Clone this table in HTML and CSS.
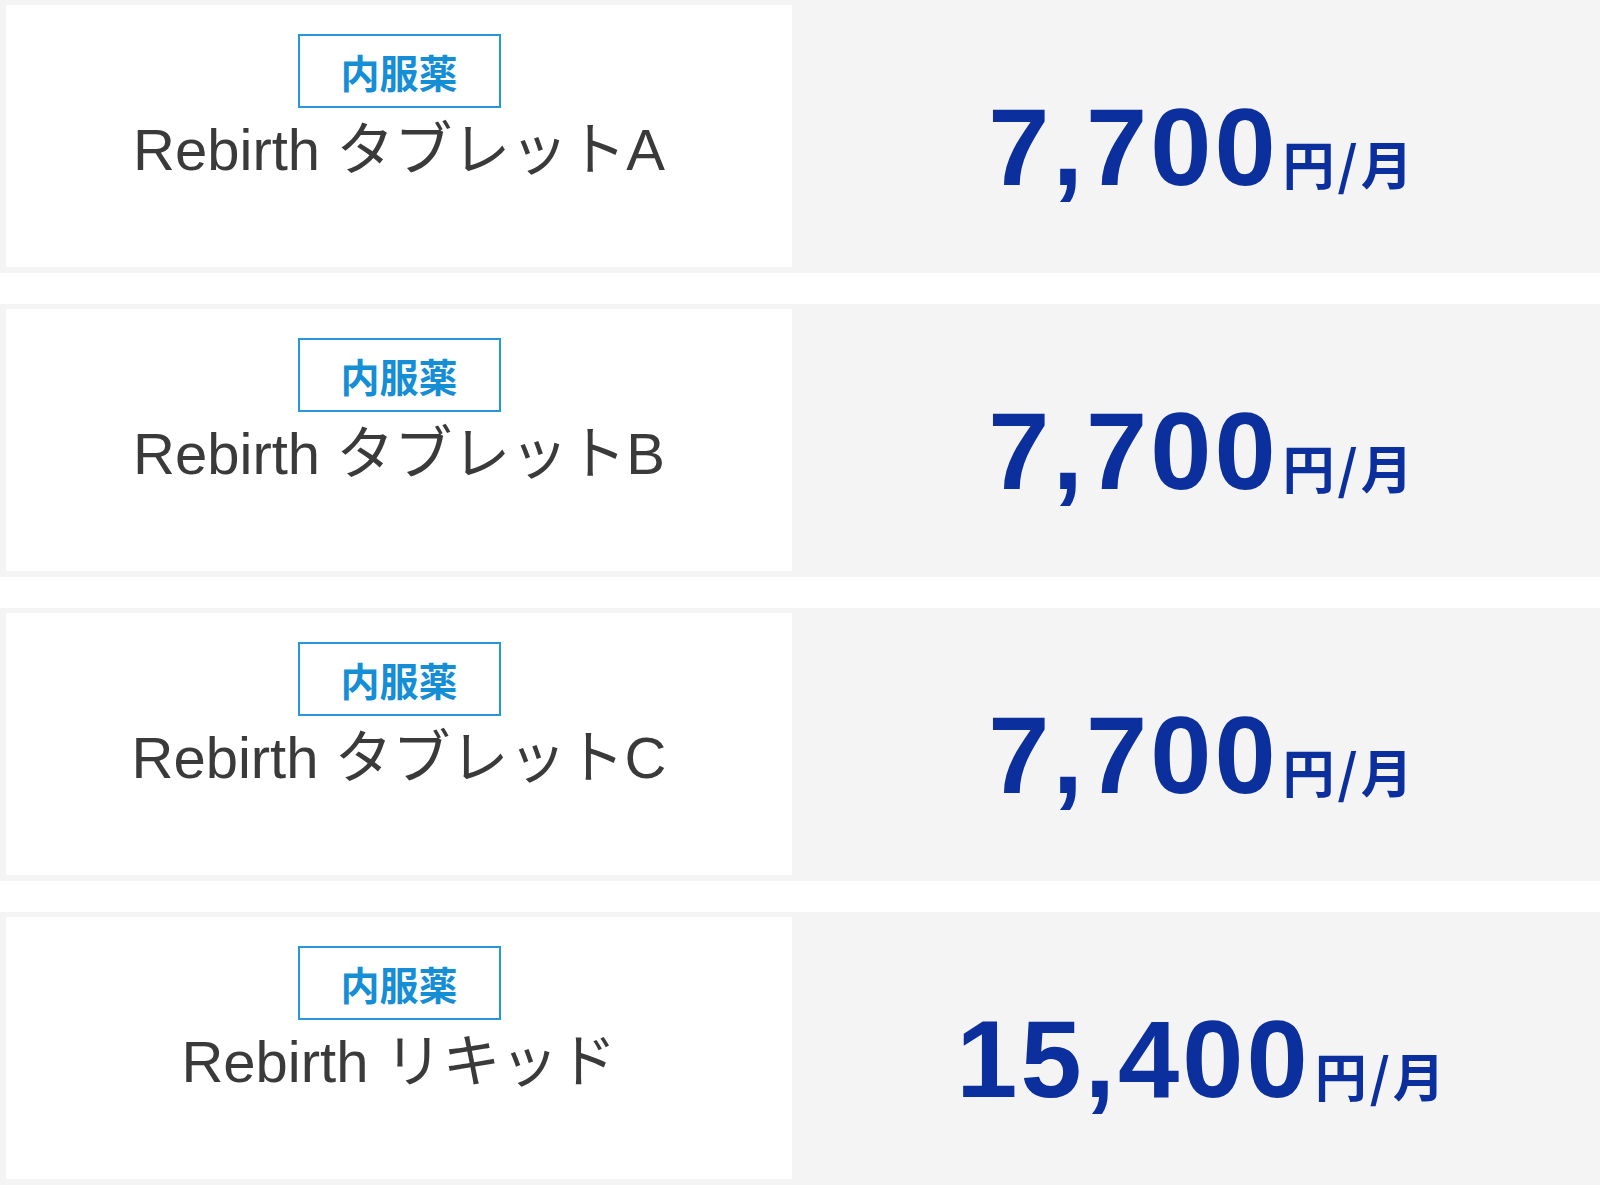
FILE: index.html
```html
<!DOCTYPE html>
<html lang="ja">
<head>
<meta charset="utf-8">
<title>Rebirth 料金</title>
<link rel="stylesheet" href="styles.css">
</head>
<body>
<div class="list">
  <div class="row">
    <div class="name-cell">
      <div class="badge">内服薬</div>
      <div class="name">Rebirth タブレットA</div>
    </div>
    <div class="price-cell">
      <div class="price"><span class="num">7,700</span><span class="unit">円/月</span></div>
    </div>
  </div>
  <div class="row">
    <div class="name-cell">
      <div class="badge">内服薬</div>
      <div class="name">Rebirth タブレットB</div>
    </div>
    <div class="price-cell">
      <div class="price"><span class="num">7,700</span><span class="unit">円/月</span></div>
    </div>
  </div>
  <div class="row">
    <div class="name-cell">
      <div class="badge">内服薬</div>
      <div class="name">Rebirth タブレットC</div>
    </div>
    <div class="price-cell">
      <div class="price"><span class="num">7,700</span><span class="unit">円/月</span></div>
    </div>
  </div>
  <div class="row">
    <div class="name-cell">
      <div class="badge">内服薬</div>
      <div class="name">Rebirth リキッド</div>
    </div>
    <div class="price-cell">
      <div class="price"><span class="num">15,400</span><span class="unit">円/月</span></div>
    </div>
  </div>
</div>
</body>
</html>
```

FILE: styles.css
```css
html, body {
  margin: 0;
  padding: 0;
  background: #ffffff;
}

.list {
  display: flex;
  flex-direction: column;
  gap: 31px;
}

.row {
  display: grid;
  grid-template-columns: 792px 1fr;
  height: 273px;
  background: #f4f4f4;
}

.name-cell {
  background: #ffffff;
  margin: 5px 0 6px 6px;
  padding-top: 29px;
  display: flex;
  flex-direction: column;
  align-items: center;
}

.badge {
  box-sizing: border-box;
  width: 203px;
  height: 74px;
  border: 2px solid #2796db;
  display: flex;
  align-items: center;
  justify-content: center;
  font-family: "Noto Sans CJK JP", sans-serif;
  font-weight: 700;
  font-size: 39px;
  line-height: 1;
  color: #168ed6;
}

.name {
  margin-top: 7px;
  font-family: "Liberation Sans", "Noto Sans CJK JP", sans-serif;
  font-size: 58px;
  line-height: 70px;
  color: #3a3a3a;
  white-space: nowrap;
}

.price-cell {
  display: flex;
  align-items: center;
  justify-content: center;
  padding-top: 21px;
  padding-left: 12px;
}

.price {
  font-family: "Liberation Sans", sans-serif;
  line-height: 1;
  color: #0b2f9c;
  white-space: nowrap;
}

.num {
  font-weight: 700;
  font-size: 110px;
  letter-spacing: 3px;
}

.unit {
  font-family: "Noto Sans CJK JP", sans-serif;
  font-weight: 700;
  font-size: 52px;
  letter-spacing: 3px;
  margin-left: 4px;
}
```
